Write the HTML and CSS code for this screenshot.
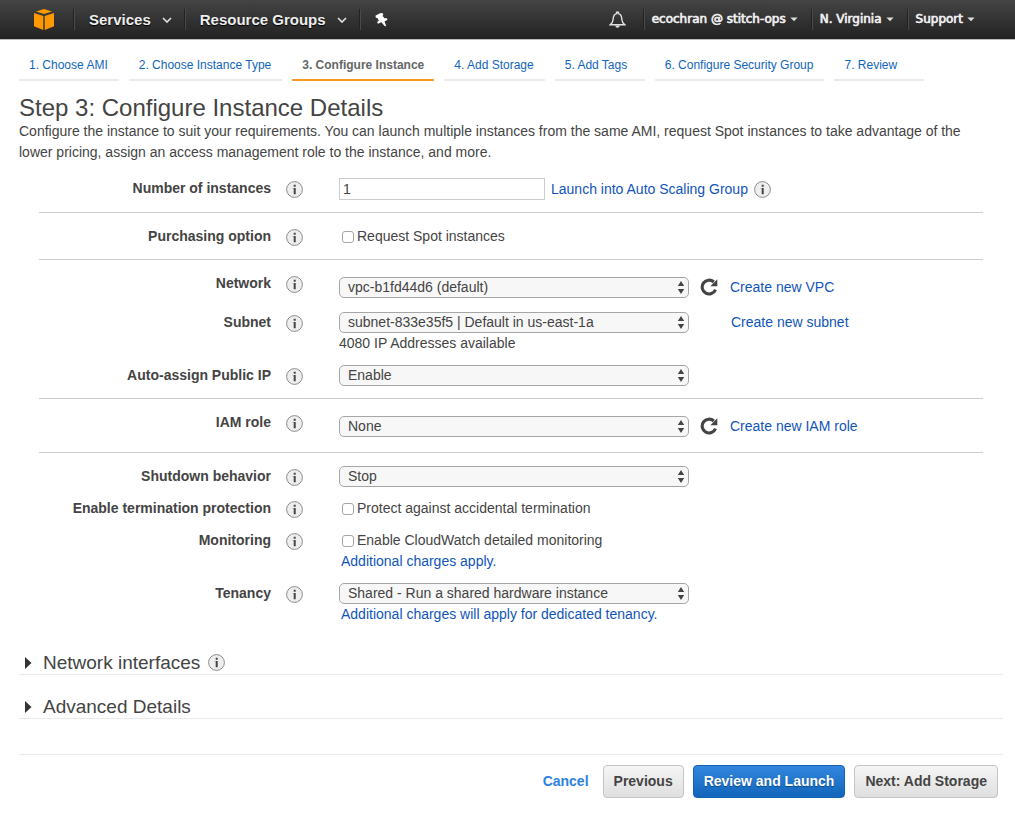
FILE: index.html
```html
<!DOCTYPE html>
<html lang="en">
<head>
<meta charset="utf-8">
<title>Configure Instance Details</title>
<link rel="stylesheet" href="styles.css">
</head>
<body>
<svg class="sprite" aria-hidden="true">
  <symbol id="i-info" viewBox="0 0 17 17"><circle cx="8.500" cy="8.500" r="7.900" fill="#eee" stroke="#8c8c8c" stroke-width="1"/><path d="M7.700 3.800h2v2h-2zM7.700 7h2v6.200h-2z" fill="#444"/><path d="M6.700 7h1v1h-1z" fill="#999"/></symbol>
  <symbol id="i-updown" viewBox="0 0 8 13"><path d="M4 0l3.200 5H.8zM4 13L.8 8h6.400z" fill="#444"/></symbol>
  <symbol id="i-refresh" viewBox="0 0 18 18"><path d="M15.500 11.600A6.900 6.900 0 1 1 13.800 4" fill="none" stroke="#444" stroke-width="3.100"/><path d="M17.300 1.200v7H10.300z" fill="#444"/></symbol>
  <symbol id="i-chevron" viewBox="0 0 10 6"><path d="M1 1l4 4 4-4" fill="none" stroke="#ddd" stroke-width="1.700"/></symbol>
  <symbol id="i-caret" viewBox="0 0 8 5"><path d="M.4.500h7.200L4 4.300z" fill="#ddd"/></symbol>
  <symbol id="i-right" viewBox="0 0 7 12"><path d="M0 0l6.500 6L0 12z" fill="#333"/></symbol>
</svg>

<header class="topbar">
  <nav class="topbar-left" aria-label="Services">
    <a class="logo" href="#" aria-label="Home"><svg width="20" height="21" viewBox="0 0 20 21"><path d="M10 0l8 2.500L10 5 2 2.500zM0 4.100l9.300 2.800V21L0 17.300zM20 4.100l-9.300 2.800V21L20 17.300z" fill="#f90"/></svg></a>
    <button class="menu" type="button">Services<svg class="chevron"><use href="#i-chevron"/></svg></button>
    <button class="menu" type="button">Resource Groups<svg class="chevron"><use href="#i-chevron"/></svg></button>
    <button class="menu" type="button" aria-label="Edit shortcuts"><svg width="13" height="14" viewBox="0 0 13 14"><path d="M4.900.2L.4 2.800l.5 2 1.500.1 1.400 2.700-1.600 1.500.7 1.600 3.400-1.500 3.600 4 1.300-.1-1.700-4.700 3-1.600-.6-1.600-2.300.1-2-2.300.7-1.600-.9-1.300z" fill="#fff"/></svg></button>
  </nav>
  <nav class="topbar-right" aria-label="Account">
    <button class="bell" type="button" aria-label="Notifications"><svg width="17" height="18" viewBox="0 0 17 18"><path d="M1.200 13.700c1.700-1.200 2.700-2.700 2.900-5 .1-3.200 1.100-5.600 3.500-6.100V1.100h1.800v1.500c2.400.5 3.400 2.900 3.500 6.100.2 2.300 1.200 3.800 2.900 5z" fill="none" stroke="#e2e2e2" stroke-width="1.400"/><path d="M6.300 14.600h4.400c-.2 3-4.200 3-4.400 0z" fill="#e2e2e2"/></svg></button>
    <button class="submenu" type="button">ecochran @ stitch-ops<svg class="caret"><use href="#i-caret"/></svg></button>
    <button class="submenu" type="button">N. Virginia<svg class="caret"><use href="#i-caret"/></svg></button>
    <button class="submenu" type="button">Support<svg class="caret"><use href="#i-caret"/></svg></button>
  </nav>
</header>

<nav class="steps" aria-label="Wizard steps">
  <a class="step" href="#">1. Choose AMI</a>
  <a class="step" href="#">2. Choose Instance Type</a>
  <a class="step current" href="#" aria-current="step">3. Configure Instance</a>
  <a class="step" href="#">4. Add Storage</a>
  <a class="step" href="#">5. Add Tags</a>
  <a class="step" href="#">6. Configure Security Group</a>
  <a class="step" href="#">7. Review</a>
</nav>

<main class="page">
  <h1 class="title">Step 3: Configure Instance Details</h1>
  <p class="intro">Configure the instance to suit your requirements. You can launch multiple instances from the same AMI, request Spot instances to take advantage of the lower pricing, assign an access management role to the instance, and more.</p>

  <form class="form">
    <section class="group">
      <div class="row">
        <label class="name" for="count">Number of instances</label>
        <svg class="info"><use href="#i-info"/></svg>
        <div class="line line-count">
          <input class="textbox" id="count" type="text" value="1">
          <a class="link" href="#">Launch into Auto Scaling Group</a>
          <svg class="info"><use href="#i-info"/></svg>
        </div>
      </div>
    </section>
    <section class="group">
      <div class="row">
        <span class="name">Purchasing option</span>
        <svg class="info"><use href="#i-info"/></svg>
        <label class="check"><input class="box" type="checkbox">Request Spot instances</label>
      </div>
    </section>
    <section class="group">
      <div class="row">
        <label class="name" for="network">Network</label>
        <svg class="info"><use href="#i-info"/></svg>
        <div class="line line-tall">
          <span class="picker"><select class="select" id="network"><option>vpc-b1fd44d6 (default)</option></select><svg class="updown"><use href="#i-updown"/></svg></span>
          <button class="refresh" type="button" aria-label="Refresh networks"><svg class="refresh-icon"><use href="#i-refresh"/></svg></button>
          <a class="link" href="#">Create new VPC</a>
        </div>
      </div>
      <div class="row">
        <label class="name" for="subnet">Subnet</label>
        <svg class="info"><use href="#i-info"/></svg>
        <div class="stack">
          <div class="line line-subnet">
            <span class="picker"><select class="select" id="subnet"><option>subnet-833e35f5 | Default in us-east-1a</option></select><svg class="updown"><use href="#i-updown"/></svg></span>
            <a class="link" href="#">Create new subnet</a>
          </div>
          <span>4080 IP Addresses available</span>
        </div>
      </div>
      <div class="row">
        <label class="name" for="publicip">Auto-assign Public IP</label>
        <svg class="info"><use href="#i-info"/></svg>
        <span class="picker"><select class="select" id="publicip"><option>Enable</option></select><svg class="updown"><use href="#i-updown"/></svg></span>
      </div>
    </section>
    <section class="group">
      <div class="row">
        <label class="name" for="role">IAM role</label>
        <svg class="info"><use href="#i-info"/></svg>
        <div class="line line-tall">
          <span class="picker"><select class="select" id="role"><option>None</option></select><svg class="updown"><use href="#i-updown"/></svg></span>
          <button class="refresh" type="button" aria-label="Refresh roles"><svg class="refresh-icon"><use href="#i-refresh"/></svg></button>
          <a class="link" href="#">Create new IAM role</a>
        </div>
      </div>
    </section>
    <section class="group">
      <div class="row">
        <label class="name" for="shutdown">Shutdown behavior</label>
        <svg class="info"><use href="#i-info"/></svg>
        <span class="picker"><select class="select" id="shutdown"><option>Stop</option></select><svg class="updown"><use href="#i-updown"/></svg></span>
      </div>
      <div class="row">
        <span class="name">Enable termination protection</span>
        <svg class="info"><use href="#i-info"/></svg>
        <label class="check"><input class="box" type="checkbox">Protect against accidental termination</label>
      </div>
      <div class="row">
        <span class="name">Monitoring</span>
        <svg class="info"><use href="#i-info"/></svg>
        <div class="stack">
          <label class="check"><input class="box" type="checkbox">Enable CloudWatch detailed monitoring</label>
          <a class="link note" href="#">Additional charges apply.</a>
        </div>
      </div>
      <div class="row">
        <label class="name" for="tenancy">Tenancy</label>
        <svg class="info"><use href="#i-info"/></svg>
        <div class="stack">
          <span class="picker"><select class="select" id="tenancy"><option>Shared - Run a shared hardware instance</option></select><svg class="updown"><use href="#i-updown"/></svg></span>
          <a class="link note" href="#">Additional charges will apply for dedicated tenancy.</a>
        </div>
      </div>
    </section>
  </form>

  <h2 class="fold"><button class="fold-button" type="button"><svg class="fold-arrow"><use href="#i-right"/></svg>Network interfaces</button><svg class="info"><use href="#i-info"/></svg></h2>
  <h2 class="fold"><button class="fold-button" type="button"><svg class="fold-arrow"><use href="#i-right"/></svg>Advanced Details</button></h2>

  <footer class="actions">
    <a class="cancel" href="#">Cancel</a>
    <button class="button" type="button">Previous</button>
    <button class="button primary" type="button">Review and Launch</button>
    <button class="button" type="button">Next: Add Storage</button>
  </footer>
</main>
</body>
</html>
```

FILE: styles.css
```css
* { box-sizing: border-box; }

body {
  margin: 0;
  background: #fff;
  color: #444;
  font: 14px/21px "Liberation Sans", Arial, sans-serif;
}

button, input, select { font: inherit; color: inherit; }
button { margin: 0; padding: 0; border: 0; background: none; }
a { text-decoration: none; }
svg { display: block; flex: none; }
.sprite { position: absolute; width: 0; height: 0; }

.topbar {
  display: flex;
  justify-content: space-between;
  height: 40px;
  border-bottom: 1px solid #bbb;
  background: linear-gradient(#444, #222);
  color: #eee;
}
.topbar-left, .topbar-right { display: flex; align-items: center; }
.topbar-left { padding-left: 34px; }
.topbar-right { padding-right: 31px; }
.logo { width: 39px; }
.menu {
  display: flex;
  align-items: center;
  gap: 11px;
  height: 21px;
  padding: 0 12px 0 15px;
  border-left: 1px solid #222;
  box-shadow: inset 1px 0 #4a4a4a;
  font-size: 15px;
  font-weight: bold;
  text-shadow: 0 1px 1px #000;
}
.chevron { width: 10px; height: 6px; }
.bell { margin-right: 17px; }
.submenu {
  display: flex;
  align-items: center;
  gap: 4px;
  height: 21px;
  padding: 0 13px 0 8px;
  border-left: 1px solid #222;
  box-shadow: inset 1px 0 #4a4a4a;
  font-family: "DejaVu Sans", Verdana, sans-serif;
  font-size: 12px;
  text-shadow: 0 0 1px #eee, 0 1px 1px #000;
  -webkit-text-stroke: 0.5px #eee;
}
.submenu:last-child { padding-right: 9px; }
.caret { width: 8px; height: 5px; }

.steps { display: flex; gap: 10px; padding: 15px 19px 0; font-size: 12px; }
.step {
  min-width: 90px;
  height: 26px;
  padding: 0 11px 0 10px;
  border-bottom: 2px solid #eaeaea;
  color: #1166bb;
  white-space: nowrap;
}
.step.current { padding: 0 10px; border-color: #f7981f; color: #666; font-weight: bold; }

.page { padding: 13px 12px 19px 19px; }
.title { margin: 0; font-size: 24px; font-weight: normal; line-height: 27px; }
.intro { margin: 0; padding-right: 10px; }

.form { margin: 2px 20px 0; }
.group {
  display: grid;
  gap: 11px;
  padding: 13px 0 12px;
  border-bottom: 1px solid #ccc;
}
.group:last-child { border-bottom: 0; }
.row {
  display: grid;
  grid-template-columns: 232px 17px 1fr;
  column-gap: 15px;
  align-items: start;
}
.name { font-weight: bold; text-align: right; }
.row > .info { margin-top: 3px; }
.row > :last-child { margin-left: 21px; }
.info { width: 17px; height: 17px; }
.line { display: flex; align-items: center; }
.line-count { gap: 6px; }
.line-tall { min-height: 28px; }
.line-subnet { gap: 42px; }
.stack { display: flex; flex-direction: column; align-items: flex-start; }
.link { color: #1155bb; }
.note { padding-left: 2px; }
.textbox { width: 206px; height: 22px; padding: 0 3px; border: 1px solid #ccc; }
.picker { position: relative; display: block; width: 350px; height: 21px; }
.select {
  display: block;
  width: 100%;
  height: 21px;
  padding: 0 24px 0 8px;
  border: 1px solid #a6a6a6;
  border-radius: 5px;
  background: #f7f7f7;
  appearance: none;
  line-height: 19px;
}
.updown { position: absolute; top: 4px; right: 4px; width: 8px; height: 13px; pointer-events: none; }
.refresh { margin: 0 12px 0 11px; }
.refresh-icon { width: 18px; height: 18px; }
.check { display: flex; align-items: center; gap: 3px; padding-left: 3px; }
.box {
  width: 12px;
  height: 12px;
  margin: 0;
  border: 1px solid #a6a6a6;
  border-radius: 3px;
  background: #fff;
  appearance: none;
}

.fold {
  display: flex;
  align-items: center;
  gap: 8px;
  height: 24px;
  margin: 20px 0 0;
  padding-left: 6px;
  border-bottom: 1px solid #eaeaea;
  font-size: 19px;
  font-weight: normal;
}
.form + .fold { margin-top: 14px; }
.fold-button { display: flex; align-items: center; gap: 11px; }
.fold-arrow { width: 7px; height: 12px; }

.actions {
  display: flex;
  justify-content: flex-end;
  align-items: center;
  gap: 9px;
  margin-top: 35px;
  padding: 10px 5px 0 0;
  border-top: 1px solid #eaeaea;
}
.cancel { margin-right: 5px; color: #2e82e0; font-weight: bold; }
.button {
  height: 33px;
  padding: 0 10px;
  border: 1px solid #c4c4c4;
  border-radius: 4px;
  background: linear-gradient(#f5f5f5, #dfdfdf);
  font-weight: bold;
}
.primary {
  border-color: #1262b4;
  background: linear-gradient(#3286dd, #1166bb);
  color: #fff;
  text-shadow: 0 1px 1px #0a4a8c;
}
```
